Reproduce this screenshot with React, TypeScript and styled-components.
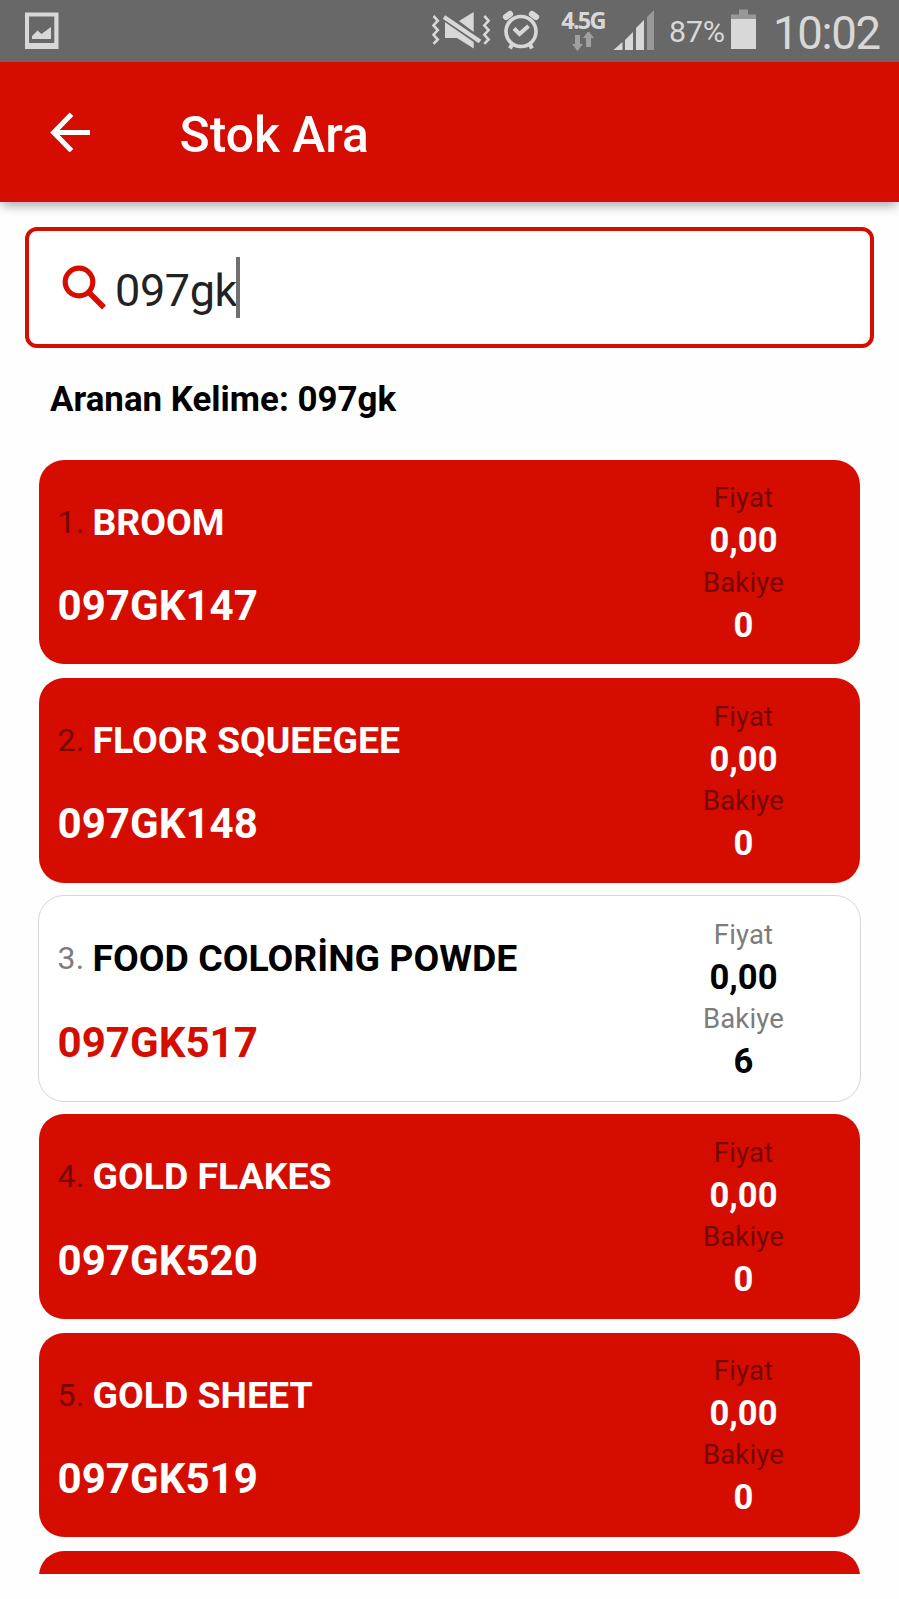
import React from "react";
import styled, { createGlobalStyle } from "styled-components";

const RED = "#d40d00";
const GREY = "#d8d8d8";

const GlobalStyle = createGlobalStyle`
  * { box-sizing: border-box; }
  html, body { margin: 0; padding: 0; background: #fefefe; }
  body { font-family: Roboto, "Noto Sans", sans-serif; overflow: hidden; }
`;

const Screen = styled.div`
  width: 899px;
  height: 1599px;
  overflow: hidden;
  display: flex;
  flex-direction: column;
  background: #fefefe;
`;

const StatusBar = styled.header`
  flex: none;
  height: 62px;
  background: #686868;
  color: ${GREY};
  display: flex;
  align-items: flex-start;
  padding: 8px 16px 0 25px;
`;

const StatusIcon = styled.svg<{ $gap?: number }>`
  display: block;
  flex: none;
  margin-left: ${(p) => p.$gap ?? 0}px;
`;

const Spacer = styled.div`
  flex: 1;
`;

const Network = styled.div`
  width: 46px;
  margin-left: 20px;
  display: flex;
  flex-direction: column;
  align-items: center;
`;

const NetworkLabel = styled.span`
  font: 700 23.5px/24px "Open Sans", sans-serif;
  letter-spacing: -1.8px;
  white-space: nowrap;
`;

const Percent = styled.span`
  width: 56px;
  margin-left: 14px;
  font-size: 30.4px;
  line-height: 48px;
  letter-spacing: -0.2px;
  white-space: nowrap;
`;

const Clock = styled.span`
  width: 110px;
  margin-left: 17px;
  font-size: 45.5px;
  line-height: 51px;
  letter-spacing: -1.3px;
  white-space: nowrap;
`;

const AppBar = styled.div`
  flex: none;
  height: 140px;
  background: ${RED};
  box-shadow: 0 6px 10px -2px rgba(0, 0, 0, 0.32);
  display: flex;
  align-items: center;
  padding: 0 50px;
  z-index: 1;
`;

const Title = styled.h1`
  margin: 5px 0 0 88.5px;
  color: #fff;
  font-size: 49.8px;
  font-weight: 500;
  line-height: 60px;
`;

const SearchBox = styled.div`
  flex: none;
  height: 121px;
  margin: 25px 25px 0;
  border: 4px solid ${RED};
  border-radius: 12px;
  background: #fff;
  display: flex;
  align-items: center;
  padding-left: 32px;
`;

const Query = styled.span`
  margin-left: 8px;
  padding-top: 6px;
  color: #222;
  font-size: 45px;
  line-height: 60px;
  letter-spacing: -0.4px;
`;

const Caret = styled.span`
  width: 4px;
  height: 61px;
  margin-left: -0.5px;
  background: #707070;
`;

const Searched = styled.p`
  flex: none;
  margin: 31px 0 0 50px;
  height: 79.8px;
  color: #000;
  font-size: 34.9px;
  font-weight: 700;
  line-height: 42px;
`;

const List = styled.main`
  height: 1115.2px;
  overflow: hidden;
  padding: 0 38px;
  display: flex;
  flex-direction: column;
  gap: 11.6px;
`;

const Card = styled.article<{ $stocked?: boolean }>`
  --muted: ${(p) => (p.$stocked ? "#7c7c7c" : "#750700")};
  --strong: ${(p) => (p.$stocked ? "#000" : "#fff")};
  --code: ${(p) => (p.$stocked ? RED : "#fff")};
  flex: none;
  height: 206.6px;
  border: 1.3px solid ${(p) => (p.$stocked ? "#d6d6d6" : "transparent")};
  border-radius: 26px;
  background: ${(p) => (p.$stocked ? "#fff" : RED)};
  background-clip: padding-box;
  display: flex;
  justify-content: space-between;
`;

const Product = styled.div`
  padding: 40px 0 0 18.5px;
`;

const NameRow = styled.div`
  display: flex;
  align-items: center;
  height: 44px;
  margin-bottom: 37.5px;
`;

const Index = styled.span`
  width: 35px;
  color: var(--muted);
  font-size: 32px;
  letter-spacing: 0.3px;
`;

const Name = styled.span`
  color: var(--strong);
  font-size: 37.4px;
  font-weight: 700;
  white-space: nowrap;
`;

const Code = styled.div`
  color: var(--code);
  font-size: 42.1px;
  font-weight: 700;
  line-height: 50px;
`;

const Figures = styled.div`
  width: 233px;
  padding-top: 17.6px;
  text-align: center;
  line-height: 42.1px;
`;

const Label = styled.div`
  color: var(--muted);
  font-size: 27.5px;
  letter-spacing: 0.15px;
`;

const Value = styled.div`
  color: var(--strong);
  font-size: 34.6px;
  font-weight: 700;
`;

const items = [
  { name: "BROOM", code: "097GK147", price: "0,00", balance: 0 },
  { name: "FLOOR SQUEEGEE", code: "097GK148", price: "0,00", balance: 0 },
  { name: "FOOD COLORİNG POWDE", code: "097GK517", price: "0,00", balance: 6 },
  { name: "GOLD FLAKES", code: "097GK520", price: "0,00", balance: 0 },
  { name: "GOLD SHEET", code: "097GK519", price: "0,00", balance: 0 },
];

export default function App() {
  return (
    <>
      <GlobalStyle />
      <Screen>
        <StatusBar>
          <StatusIcon width="34" height="46" viewBox="25 8 34 46" fill={GREY}>
            <path fillRule="evenodd" d="M25 12.5h33.5V49H25zM29 16.5V43h25.3V16.5z" />
            <path d="M32 39v-3l5.500-5.500 4 3.500 9.500-7v12z" />
          </StatusIcon>
          <Spacer />
          <StatusIcon width="60" height="46" viewBox="431 8 60 46" fill="none" stroke={GREY} strokeWidth="2.600">
            <path d="M433.500 16l4.300 4.700-4.300 4.700 4.300 4.700-4.300 4.700 4.300 4.700-4.300 4.300M484.300 16l4.300 4.700-4.300 4.700 4.300 4.700-4.300 4.700 4.300 4.700-4.300 4.300" />
            <path fill={GREY} stroke="none" d="M459 21L473.700 12v20zM445 22L473.700 42v6.500L457 38h-12z" />
            <path stroke="#686868" strokeWidth="6.400" d="M443 16.500l37 25" />
            <path strokeWidth="4.400" d="M444 17l36 24.500" />
          </StatusIcon>
          <StatusIcon $gap={11} width="38" height="46" viewBox="502 8 38 46" fill="none" stroke={GREY}>
            <circle cx="521" cy="31.500" r="15" strokeWidth="3.600" />
            <path strokeWidth="6.200" strokeLinecap="round" d="M506 17l4-3M536 17l-4-3" />
            <path strokeWidth="4" d="M512.500 43.500l-2.500 5M529.500 43.500l2.500 5" />
            <path strokeWidth="4" d="M514 28.500l5.500 5.500 9-8" />
          </StatusIcon>
          <Network>
            <NetworkLabel>4.5G</NetworkLabel>
            <StatusIcon width="22" height="20" viewBox="574 33 22 20" fill="#a0a0a0">
              <path d="M577 36h5v9h3l-5.500 7-5.500-7h3zM588 48h5v-9h3l-5.500-7-5.500 7h3z" />
            </StatusIcon>
          </Network>
          <StatusIcon $gap={7} width="42" height="46" viewBox="613 8 42 46" fill={GREY}>
            <path d="M613.500 50l9-8v8zM625 40l8-8v18h-8zM636 28l8-8v30h-8z" />
            <path fill="#989898" d="M647 17l7-7v40h-7z" />
          </StatusIcon>
          <Percent>87%</Percent>
          <StatusIcon $gap={6} width="25" height="46" viewBox="731 8 25 46" fill={GREY}>
            <path fill="#989898" d="M739 9.500h9v5h8V19h-25v-4.500h8z" />
            <path d="M731 19h25v30h-25z" />
          </StatusIcon>
          <Clock>10:02</Clock>
        </StatusBar>
        <AppBar>
          <svg width="41" height="40" viewBox="0 0 41 40" fill="none" stroke="#fff" strokeWidth="5">
            <path d="M21.500 2.300L3.700 20.500l17.800 18.200M3.700 20.500H40" />
          </svg>
          <Title>Stok Ara</Title>
        </AppBar>
        <SearchBox>
          <svg width="46" height="46" viewBox="61 264 46 46" fill="none" stroke={RED}>
            <circle cx="79" cy="281" r="13.800" strokeWidth="5.200" />
            <path strokeWidth="5.600" d="M89 291.500l15 15" />
          </svg>
          <Query>097gk</Query>
          <Caret />
        </SearchBox>
        <Searched>Aranan Kelime: 097gk</Searched>
        <List>
          {items.map((item, i) => (
            <Card key={item.code} $stocked={item.balance > 0}>
              <Product>
                <NameRow>
                  <Index>{i + 1}.</Index>
                  <Name>{item.name}</Name>
                </NameRow>
                <Code>{item.code}</Code>
              </Product>
              <Figures>
                <Label>Fiyat</Label>
                <Value>{item.price}</Value>
                <Label>Bakiye</Label>
                <Value>{item.balance}</Value>
              </Figures>
            </Card>
          ))}
          <Card />
        </List>
      </Screen>
    </>
  );
}
